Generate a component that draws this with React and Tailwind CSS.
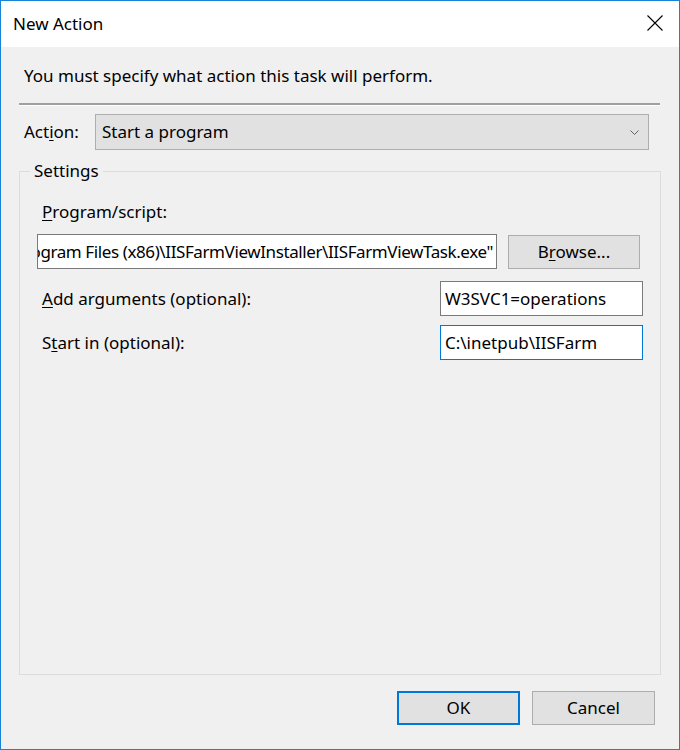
export default function App() {
  const font = { fontFamily: '"Noto Sans", "Open Sans", sans-serif' };

  return (
    <div
      className="w-[680px] h-[750px] border border-[#1883d7] flex flex-col bg-[#f0f0f0] text-black"
      style={font}
    >
      {/* title bar */}
      <div className="h-[46px] bg-white flex items-center justify-between pl-[12px] pr-[16px]">
        <span className="text-[17px] leading-[22px]">New Action</span>
        <svg width="16" height="16" viewBox="0 0 16 16" className="-mt-[2px]">
          <path d="M0.5 0.5 L15.5 15.5 M15.5 0.5 L0.5 15.5" stroke="#000" strokeWidth="1.1" fill="none" />
        </svg>
      </div>

      <div className="flex-1 flex flex-col px-[18px]">
        <p className="pl-[5px] pt-[18px] text-[17px] leading-[22px]">
          You must specify what action this task will perform.
        </p>

        {/* etched separator */}
        <div className="mt-[16px] h-[2px] border-t-2 border-[#a0a0a0] border-b border-b-white w-[641px]" />

        {/* action row */}
        <div className="mt-[8px] flex items-center pl-[5px] pr-[12px]">
          <span className="text-[17px] leading-[22px] w-[71px]">
            Act<span className="underline underline-offset-2">i</span>on:
          </span>
          <div className="flex-1 h-[36px] bg-[#e1e1e1] border border-[#adadad] flex items-center justify-between pl-[6px] pr-[9px]">
            <span className="text-[17px] leading-[22px]">Start a program</span>
            <svg width="9" height="5" viewBox="0 0 9 5">
              <path d="M0.5 0.5 L4.5 4.5 L8.5 0.5" stroke="#606060" strokeWidth="1" fill="none" />
            </svg>
          </div>
        </div>

        {/* settings group */}
        <div className="relative mt-[21px] h-[504px] w-[642px] border border-[#dcdcdc] pt-[29px] pl-[17px] pr-[18px]">
          <span className="absolute -top-[12px] left-[10px] bg-[#f0f0f0] px-[4px] text-[17px] leading-[22px]">
            Settings
          </span>

          <div className="pl-[5px] text-[17px] leading-[22px]">
            <span className="underline underline-offset-2">P</span>rogram/script:
          </div>

          <div className="mt-[11px] flex items-center">
            <div className="w-[460px] h-[35px] bg-white border border-[#7a7a7a] overflow-hidden flex items-center justify-end pr-[3px]">
              <span className="whitespace-nowrap text-[17px] leading-[22px] tracking-[-0.4px]">
                "C:\Program Files (x86)\IISFarmViewInstaller\IISFarmViewTask.exe"
              </span>
            </div>
            <button className="ml-[11px] w-[132px] h-[34px] bg-[#e1e1e1] border border-[#adadad] text-[17px] leading-[22px]">
              B<span className="underline underline-offset-2">r</span>owse...
            </button>
          </div>

          <div className="mt-[12px] flex items-center justify-between">
            <span className="pl-[5px] text-[17px] leading-[22px]">
              <span className="underline underline-offset-2">A</span>dd arguments (optional):
            </span>
            <div className="w-[203px] h-[35px] bg-white border border-[#7a7a7a] flex items-center pl-[4px] text-[17px] leading-[22px] -mr-[1px]">
              W3SVC1=operations
            </div>
          </div>

          <div className="mt-[9px] flex items-center justify-between">
            <span className="pl-[5px] text-[17px] leading-[22px]">
              S<span className="underline underline-offset-2">t</span>art in (optional):
            </span>
            <div className="w-[203px] h-[35px] bg-white border border-[#0078d7] flex items-center pl-[4px] text-[17px] leading-[22px] -mr-[1px]">
              C:\inetpub\IISFarm
            </div>
          </div>
        </div>

        {/* footer buttons */}
        <div className="mt-[16px] flex justify-end gap-[12px] pr-[6px]">
          <button className="w-[123px] h-[34px] bg-[#e1e1e1] border-2 border-[#0078d7] text-[17px] leading-[22px]">
            OK
          </button>
          <button className="w-[123px] h-[34px] bg-[#e1e1e1] border border-[#adadad] text-[17px] leading-[22px]">
            Cancel
          </button>
        </div>
      </div>
    </div>
  );
}
